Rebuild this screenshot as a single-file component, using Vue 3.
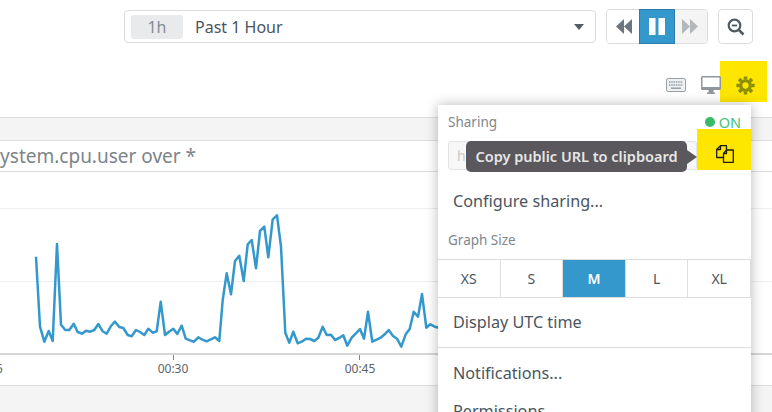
<script setup>
const a = [[108,170],[120,380],[133,425],[146,393],[158,423],[171,132],[183,374],[196,390],[208,390],[221,371],[233,396],[246,401],[258,392],[271,395],[283,390],[295,372],[308,394],[320,401],[333,378],[345,365],[358,381],[370,384],[383,405],[395,409],[408,390],[420,396],[433,405],[445,386],[458,398],[470,394],[482,305],[495,405],[507,395],[520,386],[532,402],[545,377],[557,416],[570,421],[582,425],[595,412],[607,419],[620,424],[632,418],[645,412],[658,423]]
const b = [[8,300],[20,220],[33,283],[45,183],[58,167],[71,243],[83,133],[95,120],[108,205],[120,93],[133,80],[145,172],[158,58],[171,46],[183,140],[196,398],[208,428],[220,395],[233,430],[245,425],[258,416],[270,417],[283,423],[295,413],[308,380],[320,405],[333,404],[345,420],[358,414],[370,406],[382,437],[395,413],[407,401],[420,387],[432,416],[444,335],[457,425],[470,419],[482,413],[494,403],[506,390],[519,408],[531,416],[544,440],[557,403],[569,387],[581,335],[594,350],[606,282],[619,383],[631,373],[644,380],[656,383]]
const points = [...a.map(([x, y]) => [x / 3, 200 + y / 3]), ...b.map(([x, y]) => [220 + x / 3, 200 + y / 3])]
  .map(([x, y]) => `${x.toFixed(1)},${y.toFixed(1)}`).join(' ')
const sizes = ['XS', 'S', 'M', 'L', 'XL']
const teeth = [0, 45, 90, 135, 180, 225, 270, 315]
</script>

<template>
  <div class="page">
    <header class="top">
      <div class="range">
        <span class="badge">1h</span>
        <span class="range-text">Past 1 Hour</span>
        <span class="caret"></span>
      </div>
      <div class="player">
        <button class="pbtn">
          <svg width="16" height="15" viewBox="0 0 16 15"><path d="M8 0V15L0 7.500ZM16 0V15L8 7.500Z" fill="#6b767e"/></svg>
        </button>
        <button class="pbtn on">
          <svg width="16" height="17" viewBox="0 0 16 17"><path d="M0 0H6.500V17H0ZM9.500 0H16V17H9.500Z" fill="#fff"/></svg>
        </button>
        <button class="pbtn off">
          <svg width="16" height="15" viewBox="0 0 16 15"><path d="M0 0V15L8 7.500ZM8 0V15L16 7.500Z" fill="#b4b8bd"/></svg>
        </button>
      </div>
      <button class="zoom">
        <svg width="18" height="18" viewBox="0 0 18 18" fill="none" stroke="#4f5a62"><circle cx="7.500" cy="7.500" r="5.800" stroke-width="2.200"/><path d="M4.800 7.500H10.200" stroke-width="1.800"/><path d="M11.800 11.800L16.500 16.500" stroke-width="2.600"/></svg>
      </button>
    </header>

    <div class="icons">
      <svg class="kbd" width="20" height="14" viewBox="0 0 20 14" fill="none">
        <rect x=".5" y=".5" width="19" height="13" rx="1.500" fill="#eef0f1" stroke="#9aa1a6"/>
        <path d="M3 4H17M3 7H17" stroke="#8f979d" stroke-width="1.400" stroke-dasharray="1.400 .9"/>
        <path d="M5 10.200H15" stroke="#8f979d" stroke-width="1.400"/>
      </svg>
      <svg class="mon" width="20" height="18" viewBox="0 0 20 18">
        <path d="M1.500 0H18.500A1.500 1.500 0 0 1 20 1.500V12.500A1.500 1.500 0 0 1 18.500 14H1.500A1.500 1.500 0 0 1 0 12.500V1.500A1.500 1.500 0 0 1 1.500 0ZM1.500 1.500V11H18.500V1.500Z" fill="#8f979d" fill-rule="evenodd"/>
        <path d="M7.500 14H12.500V16.500H14V18H6V16.500H7.500Z" fill="#8f979d"/>
      </svg>
      <div class="gear-cell">
        <svg width="19" height="19" viewBox="-10 -10 20 20">
          <circle r="5" fill="none" stroke="#8a8f04" stroke-width="3.400"/>
          <rect v-for="t in teeth" :key="t" x="-1.900" y="-9.600" width="3.800" height="3.400" rx=".5" fill="#8a8f04" :transform="`rotate(${t})`"/>
        </svg>
      </div>
    </div>

    <section class="panel">
      <div class="band"></div>
      <div class="title"><span>system.cpu.user over *</span></div>
      <svg class="chart" width="772" height="213" viewBox="0 172 772 213">
        <path d="M0 208.500H772M0 281.500H772" stroke="#eeeeee" stroke-width="1"/>
        <path d="M0 354H772" stroke="#d6d6d6" stroke-width="2"/>
        <path d="M173.500 355V360M359.500 355V360" stroke="#888" stroke-width="1"/>
        <polyline :points="points" fill="none" stroke="#3498cd" stroke-width="2.500" stroke-linejoin="round"/>
        <text x="-4" y="373" class="tick">5</text>
        <text x="173" y="373" class="tick" text-anchor="middle">00:30</text>
        <text x="360" y="373" class="tick" text-anchor="middle">00:45</text>
      </svg>
      <div class="foot"></div>
    </section>

    <aside class="menu">
      <div class="share-head">
        <span class="label">Sharing</span>
        <span class="status"><i class="dot"></i>ON</span>
      </div>
      <div class="share-row">
        <div class="url">h</div>
        <div class="copy-cell">
          <svg width="18" height="18" viewBox="0 0 18 18" fill="none" stroke="#1d1d10" stroke-width="1.300" stroke-linejoin="round">
            <path d="M7.500 12.500H.7V4.500L4.500.7H10.500V5"/>
            <path d="M4.500.7V4.500H.7"/>
            <path d="M10.500 5H17.300V17.300H7.500V8.500Z"/>
            <path d="M10.500 5V8.500H7.500"/>
          </svg>
        </div>
      </div>
      <a class="item first">Configure sharing...</a>
      <div class="label size-label">Graph Size</div>
      <div class="sizes">
        <span v-for="s in sizes" :key="s" class="size" :class="{ active: s === 'M' }">{{ s }}</span>
      </div>
      <a class="item utc">Display UTC time</a>
      <div class="rule"></div>
      <a class="item notif">Notifications...</a>
      <a class="item perm">Permissions</a>
      <div class="tip">Copy public URL to clipboard</div>
    </aside>
  </div>
</template>

<style scoped>
.page {
  position: relative;
  width: 772px;
  height: 412px;
  overflow: hidden;
  background: #fff;
  font-family: "Noto Sans", "Open Sans", sans-serif;
  color: #4a5560;
}
.top {
  height: 53px;
  display: flex;
  align-items: center;
  padding-left: 124px;
  box-sizing: border-box;
}
.range {
  width: 472px;
  height: 33px;
  box-sizing: border-box;
  border: 1px solid #dcdcdc;
  border-radius: 4px;
  display: flex;
  align-items: center;
  padding-left: 6px;
  padding-right: 11px;
}
.badge {
  width: 52px;
  height: 24px;
  background: #e9eaec;
  border-radius: 3px;
  color: #858d93;
  font-size: 16px;
  line-height: 24px;
  text-align: center;
}
.range-text {
  margin-left: 12px;
  font-size: 16px;
  flex: 1;
}
.caret {
  width: 0;
  height: 0;
  border-left: 5.500px solid transparent;
  border-right: 5.500px solid transparent;
  border-top: 6px solid #555c62;
}
.player {
  margin-left: 10px;
  display: flex;
  height: 35px;
  width: 102px;
  box-sizing: border-box;
  border: 1px solid #dcdcdc;
  border-radius: 4px;
}
.pbtn {
  flex: 1;
  padding: 0;
  border: 0;
  background: #fff;
  display: flex;
  align-items: center;
  justify-content: center;
}
.pbtn:first-child { border-radius: 3px 0 0 3px; }
.pbtn.on {
  background: #3498cd;
  box-shadow: 0 0 0 1px #2a7ca8;
  position: relative;
}
.pbtn.off {
  background: #f4f4f4;
  border-radius: 0 3px 3px 0;
}
.zoom {
  margin-left: 10px;
  width: 35px;
  height: 35px;
  padding: 0;
  background: #fff;
  border: 1px solid #dcdcdc;
  border-radius: 4px;
  display: flex;
  align-items: center;
  justify-content: center;
}
.icons {
  margin-top: 8px;
  height: 41px;
  display: flex;
  justify-content: flex-end;
  align-items: center;
  padding-right: 5px;
}
.kbd { margin: 7px 15px 0 0; }
.mon { margin: 7px -1px 0 0; position: relative; z-index: 1; }
.gear-cell {
  width: 47px;
  height: 41px;
  background: #ffe600;
  display: flex;
  align-items: center;
  justify-content: center;
  padding: 7px 0 0 3px;
  box-sizing: border-box;
}
.panel {
  margin-top: 15px;
  border-top: 1px solid #dedede;
}
.band {
  height: 22px;
  background: #f4f4f4;
  border-bottom: 1px solid #dedede;
}
.title {
  height: 30px;
  border-bottom: 1px solid #dedede;
  overflow: hidden;
  line-height: 30px;
  font-size: 19px;
  color: #7c848a;
  white-space: nowrap;
}
.title span {
  display: block;
  margin-left: -9px;
}
.chart { display: block; }
.tick {
  font-size: 12px;
  fill: #5a6369;
  font-family: "Noto Sans", "Open Sans", sans-serif;
}
.foot {
  height: 30px;
  border-top: 1px solid #dedede;
  background: #f4f4f4;
}
.menu {
  position: absolute;
  left: 438px;
  top: 105px;
  width: 313px;
  height: 340px;
  background: #fff;
  box-shadow: 0 0 12px rgba(0, 0, 0, 0.28);
}
.label {
  font-size: 13.500px;
  color: #7f878d;
}
.share-head {
  height: 24px;
  padding: 10px 10px 0;
  display: flex;
  justify-content: space-between;
  align-items: center;
  box-sizing: border-box;
}
.status {
  font-size: 14.500px;
  color: #3fc47a;
  display: flex;
  align-items: center;
}
.dot {
  width: 10px;
  height: 10px;
  border-radius: 50%;
  background: #37bb66;
  margin-right: 4px;
}
.share-row {
  height: 41px;
  display: flex;
  align-items: flex-end;
}
.url {
  margin-left: 10px;
  width: 249px;
  height: 29px;
  background: #f7f7f7;
  border: 1px solid #e4e4e4;
  border-radius: 3px;
  box-sizing: border-box;
  padding-left: 8px;
  font-size: 14px;
  line-height: 27px;
  color: #c9cccf;
}
.copy-cell {
  width: 54px;
  height: 41px;
  background: #ffe600;
  display: flex;
  align-items: center;
  justify-content: center;
  padding: 9px 0 0 2px;
  box-sizing: border-box;
}
.item {
  display: block;
  padding-left: 15px;
  font-size: 16.200px;
  line-height: 24px;
  color: #4a5560;
}
.first { margin-top: 19px; }
.size-label { margin: 18px 0 0 10px; line-height: 18px; }
.sizes {
  margin-top: 10px;
  height: 39px;
  display: flex;
  box-sizing: border-box;
  border-top: 1px solid #dedede;
  border-bottom: 1px solid #dedede;
}
.size {
  flex: 1;
  border-right: 1px solid #dedede;
  font-size: 14px;
  line-height: 37px;
  text-align: center;
}
.size.active {
  background: #3498cd;
  color: #fff;
  font-weight: 600;
}
.utc { margin-top: 12px; }
.rule {
  margin-top: 13px;
  height: 1px;
  background: #dedede;
}
.notif { margin-top: 13px; }
.perm { margin-top: 14px; }
.tip {
  position: absolute;
  left: 28px;
  top: 36px;
  width: 221px;
  height: 31px;
  border-radius: 5px;
  background: #5a585d;
  color: #e6e6e6;
  font-size: 14.500px;
  font-weight: 600;
  line-height: 31px;
  text-align: center;
  white-space: nowrap;
}
.tip::after {
  content: "";
  position: absolute;
  left: 100%;
  top: 9px;
  border-left: 10px solid #5a585d;
  border-top: 7px solid transparent;
  border-bottom: 7px solid transparent;
}
</style>
